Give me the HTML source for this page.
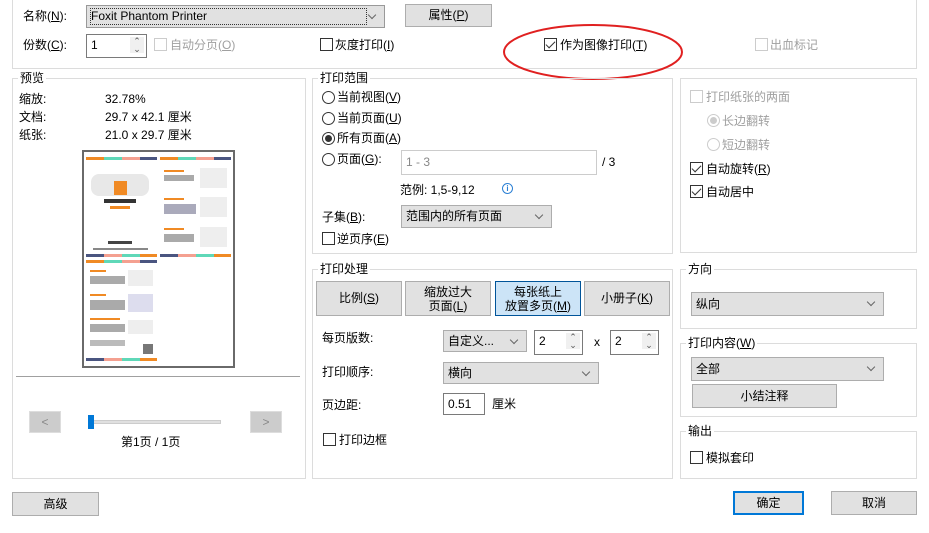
<!DOCTYPE html>
<html><head><meta charset="utf-8"><style>
*{box-sizing:border-box;margin:0;padding:0}
body{width:929px;height:533px;background:#fff;position:relative;overflow:hidden;font-family:"Liberation Sans","Noto Sans CJK SC",sans-serif;font-size:12px;color:#000}
.a{position:absolute;white-space:nowrap;line-height:16px}
.g{position:absolute;border:1px solid #dcdcdc}
.gt{position:absolute;background:#fff;padding:0 2px;line-height:16px;white-space:nowrap}
.btn{position:absolute;background:#e1e1e1;border:1px solid #adadad;text-align:center;line-height:20px}
.sel{position:absolute;background:#e1e1e1;border:1px solid #adadad;line-height:20px;padding-left:4px}
.sel:after{content:"";position:absolute;right:9px;top:6px;width:5px;height:5px;border-right:1px solid #666;border-bottom:1px solid #666;transform:rotate(45deg)}
.inp{position:absolute;background:#fff;border:1px solid #7a7a7a;line-height:20px;padding-left:4px}
.cb{position:absolute;width:13px;height:13px;border:1px solid #333;background:#fff}
.cb.d{border-color:#ccc}
.cb.c:after{content:"";position:absolute;left:3px;top:0px;width:4px;height:8px;border-right:1.5px solid #333;border-bottom:1.5px solid #333;transform:rotate(45deg)}
.rb{position:absolute;width:13px;height:13px;border:1px solid #333;border-radius:50%;background:#fff}
.rb.d{border-color:#ccc}
.rb.c:after{content:"";position:absolute;left:2px;top:2px;width:7px;height:7px;border-radius:50%;background:#333}
.rb.d.c:after{background:#ccc}
.dis{color:#a0a0a0}
.spin{position:absolute;right:2px;top:2px;width:14px;font-size:9px;color:#555;line-height:8px;text-align:center;background:#f0f0f0}
.bar{position:absolute;height:3px}
</style></head><body>

<!-- top group -->
<div class="g" style="left:12px;top:-5px;width:905px;height:74px"></div>
<div class="a" style="left:23px;top:8px">名称(<u>N</u>):</div>
<div class="sel" style="left:86px;top:5px;width:299px;height:23px;border-color:#999"><span style="outline:1px dotted #333;display:inline-block;width:275px;line-height:15px;margin-top:2px">Foxit Phantom Printer</span></div>
<div class="btn" style="left:405px;top:4px;width:87px;height:23px">属性(<u>P</u>)</div>
<div class="a" style="left:23px;top:37px">份数(<u>C</u>):</div>
<div class="inp" style="left:86px;top:34px;width:61px;height:24px">1<div class="spin">⌃<br>⌄</div></div>
<div class="cb d" style="left:154px;top:38px"></div><div class="a dis" style="left:170px;top:37px">自动分页(<u>O</u>)</div>
<div class="cb" style="left:320px;top:38px"></div><div class="a" style="left:335px;top:37px">灰度打印(<u>I</u>)</div>
<div class="cb c" style="left:544px;top:38px"></div><div class="a" style="left:560px;top:37px">作为图像打印(<u>T</u>)</div>
<div class="cb d" style="left:755px;top:38px"></div><div class="a dis" style="left:770px;top:37px">出血标记</div>
<svg style="position:absolute;left:0;top:0" width="929" height="533"><ellipse cx="593" cy="52" rx="89" ry="27" fill="none" stroke="#e02020" stroke-width="2"/></svg>

<!-- preview -->
<div class="g" style="left:12px;top:78px;width:294px;height:401px"></div>
<div class="gt" style="left:18px;top:70px">预览</div>
<div class="a" style="left:19px;top:91px">缩放:</div><div class="a" style="left:105px;top:91px">32.78%</div>
<div class="a" style="left:19px;top:109px">文档:</div><div class="a" style="left:105px;top:109px">29.7 x 42.1 厘米</div>
<div class="a" style="left:19px;top:127px">纸张:</div><div class="a" style="left:105px;top:127px">21.0 x 29.7 厘米</div>
<div style="position:absolute;left:82px;top:150px;width:153px;height:218px;border:2px solid #6a6a6a;background:#fff"></div>
<!-- bars -->
<div class="bar" style="left:86px;top:157px;width:18px;background:#f08a24"></div><div class="bar" style="left:104px;top:157px;width:18px;background:#5fd8b8"></div><div class="bar" style="left:122px;top:157px;width:18px;background:#f4a090"></div><div class="bar" style="left:140px;top:157px;width:17px;background:#4a5580"></div>
<div class="bar" style="left:160px;top:157px;width:18px;background:#f08a24"></div><div class="bar" style="left:178px;top:157px;width:18px;background:#5fd8b8"></div><div class="bar" style="left:196px;top:157px;width:18px;background:#f4a090"></div><div class="bar" style="left:214px;top:157px;width:17px;background:#4a5580"></div>
<div class="bar" style="left:86px;top:254px;width:18px;background:#4a5580"></div><div class="bar" style="left:104px;top:254px;width:18px;background:#f4a090"></div><div class="bar" style="left:122px;top:254px;width:18px;background:#5fd8b8"></div><div class="bar" style="left:140px;top:254px;width:17px;background:#f08a24"></div>
<div class="bar" style="left:160px;top:254px;width:18px;background:#4a5580"></div><div class="bar" style="left:178px;top:254px;width:18px;background:#f4a090"></div><div class="bar" style="left:196px;top:254px;width:18px;background:#5fd8b8"></div><div class="bar" style="left:214px;top:254px;width:17px;background:#f08a24"></div>
<div class="bar" style="left:86px;top:260px;width:18px;background:#f08a24"></div><div class="bar" style="left:104px;top:260px;width:18px;background:#5fd8b8"></div><div class="bar" style="left:122px;top:260px;width:18px;background:#f4a090"></div><div class="bar" style="left:140px;top:260px;width:17px;background:#4a5580"></div>
<div class="bar" style="left:86px;top:358px;width:18px;background:#4a5580"></div><div class="bar" style="left:104px;top:358px;width:18px;background:#f4a090"></div><div class="bar" style="left:122px;top:358px;width:18px;background:#5fd8b8"></div><div class="bar" style="left:140px;top:358px;width:17px;background:#f08a24"></div>
<!-- preview content -->
<div style="position:absolute;left:91px;top:174px;width:58px;height:22px;background:#e8e8e8;border-radius:8px"></div>
<div style="position:absolute;left:114px;top:181px;width:13px;height:14px;background:#f08a24"></div>
<div style="position:absolute;left:104px;top:199px;width:32px;height:4px;background:#333"></div>
<div style="position:absolute;left:110px;top:206px;width:20px;height:3px;background:#f08a24"></div>
<div style="position:absolute;left:108px;top:241px;width:24px;height:3px;background:#444"></div>
<div style="position:absolute;left:93px;top:248px;width:55px;height:2px;background:#888"></div>
<div style="position:absolute;left:164px;top:170px;width:20px;height:2px;background:#f08a24"></div>
<div style="position:absolute;left:164px;top:175px;width:30px;height:6px;background:#aaa"></div>
<div style="position:absolute;left:200px;top:168px;width:27px;height:20px;background:#eee"></div>
<div style="position:absolute;left:164px;top:198px;width:20px;height:2px;background:#f08a24"></div>
<div style="position:absolute;left:164px;top:204px;width:32px;height:10px;background:#aab"></div>
<div style="position:absolute;left:200px;top:197px;width:27px;height:20px;background:#eee"></div>
<div style="position:absolute;left:164px;top:228px;width:20px;height:2px;background:#f08a24"></div>
<div style="position:absolute;left:164px;top:234px;width:30px;height:8px;background:#aaa"></div>
<div style="position:absolute;left:200px;top:227px;width:27px;height:20px;background:#eee"></div>
<div style="position:absolute;left:90px;top:270px;width:16px;height:2px;background:#f08a24"></div>
<div style="position:absolute;left:90px;top:276px;width:35px;height:8px;background:#aaa"></div>
<div style="position:absolute;left:128px;top:270px;width:25px;height:16px;background:#eee"></div>
<div style="position:absolute;left:90px;top:294px;width:16px;height:2px;background:#f08a24"></div>
<div style="position:absolute;left:90px;top:300px;width:35px;height:10px;background:#aaa"></div>
<div style="position:absolute;left:128px;top:294px;width:25px;height:18px;background:#dde"></div>
<div style="position:absolute;left:90px;top:318px;width:30px;height:2px;background:#f08a24"></div>
<div style="position:absolute;left:90px;top:324px;width:35px;height:8px;background:#aaa"></div>
<div style="position:absolute;left:128px;top:320px;width:25px;height:14px;background:#eee"></div>
<div style="position:absolute;left:90px;top:340px;width:35px;height:6px;background:#bbb"></div>
<div style="position:absolute;left:143px;top:344px;width:10px;height:10px;background:#777"></div>
<div style="position:absolute;left:16px;top:376px;width:284px;height:1px;background:#a0a0a0"></div>
<div class="btn" style="left:29px;top:411px;width:32px;height:22px;background:#ccc;border-color:#ddd;color:#888">&lt;</div>
<div class="btn" style="left:250px;top:411px;width:32px;height:22px;background:#ccc;border-color:#ddd;color:#888">&gt;</div>
<div style="position:absolute;left:88px;top:420px;width:133px;height:4px;background:#e0e0e0;border:1px solid #ccc"></div>
<div style="position:absolute;left:88px;top:415px;width:6px;height:14px;background:#0078d7"></div>
<div class="a" style="left:121px;top:434px">第1页 / 1页</div>

<!-- print range -->
<div class="g" style="left:312px;top:78px;width:361px;height:176px"></div>
<div class="gt" style="left:318px;top:70px">打印范围</div>
<div class="rb" style="left:322px;top:91px"></div><div class="a" style="left:337px;top:89px">当前视图(<u>V</u>)</div>
<div class="rb" style="left:322px;top:112px"></div><div class="a" style="left:337px;top:110px">当前页面(<u>U</u>)</div>
<div class="rb c" style="left:322px;top:132px"></div><div class="a" style="left:337px;top:130px">所有页面(<u>A</u>)</div>
<div class="rb" style="left:322px;top:153px"></div><div class="a" style="left:337px;top:151px">页面(<u>G</u>):</div>
<div class="inp" style="left:401px;top:150px;width:196px;height:25px;border-color:#ccc;color:#888;line-height:22px">1 - 3</div>
<div class="a" style="left:602px;top:154px">/ 3</div>
<div class="a" style="left:400px;top:182px">范例: 1,5-9,12</div>
<div style="position:absolute;left:502px;top:183px;width:11px;height:11px;border:1px solid #2a7fd4;border-radius:50%;color:#2a7fd4;font-size:8px;line-height:9px;text-align:center;font-weight:bold">i</div>
<div class="a" style="left:322px;top:209px">子集(<u>B</u>):</div>
<div class="sel" style="left:401px;top:205px;width:151px;height:23px">范围内的所有页面</div>
<div class="cb" style="left:322px;top:232px"></div><div class="a" style="left:337px;top:231px">逆页序(<u>E</u>)</div>

<!-- print processing -->
<div class="g" style="left:312px;top:269px;width:361px;height:210px"></div>
<div class="gt" style="left:318px;top:261px">打印处理</div>
<div class="btn" style="left:316px;top:281px;width:86px;height:35px;line-height:33px">比例(<u>S</u>)</div>
<div class="btn" style="left:405px;top:281px;width:86px;height:35px;line-height:14px;padding-top:3px">缩放过大<br>页面(<u>L</u>)</div>
<div class="btn" style="left:495px;top:281px;width:86px;height:35px;line-height:14px;padding-top:3px;background:#cce4f7;border-color:#005499">每张纸上<br>放置多页(<u>M</u>)</div>
<div class="btn" style="left:584px;top:281px;width:86px;height:35px;line-height:33px">小册子(<u>K</u>)</div>
<div class="a" style="left:322px;top:330px">每页版数:</div>
<div class="sel" style="left:443px;top:330px;width:84px;height:22px">自定义...</div>
<div class="inp" style="left:534px;top:330px;width:49px;height:25px">2<div class="spin">⌃<br>⌄</div></div>
<div class="a" style="left:594px;top:334px">x</div>
<div class="inp" style="left:610px;top:330px;width:49px;height:25px">2<div class="spin">⌃<br>⌄</div></div>
<div class="a" style="left:322px;top:364px">打印顺序:</div>
<div class="sel" style="left:443px;top:362px;width:156px;height:22px">横向</div>
<div class="a" style="left:322px;top:397px">页边距:</div>
<div class="inp" style="left:443px;top:393px;width:42px;height:22px">0.51</div>
<div class="a" style="left:492px;top:396px">厘米</div>
<div class="cb" style="left:323px;top:433px"></div><div class="a" style="left:339px;top:432px">打印边框</div>

<!-- right -->
<div class="g" style="left:680px;top:78px;width:237px;height:175px"></div>
<div class="cb d" style="left:690px;top:90px"></div><div class="a dis" style="left:706px;top:89px">打印纸张的两面</div>
<div class="rb d c" style="left:707px;top:114px"></div><div class="a dis" style="left:722px;top:113px">长边翻转</div>
<div class="rb d" style="left:707px;top:138px"></div><div class="a dis" style="left:722px;top:137px">短边翻转</div>
<div class="cb c" style="left:690px;top:162px"></div><div class="a" style="left:706px;top:161px">自动旋转(<u>R</u>)</div>
<div class="cb c" style="left:690px;top:185px"></div><div class="a" style="left:706px;top:184px">自动居中</div>

<div class="g" style="left:680px;top:269px;width:237px;height:60px"></div>
<div class="gt" style="left:686px;top:261px">方向</div>
<div class="sel" style="left:691px;top:292px;width:193px;height:24px;line-height:22px">纵向</div>

<div class="g" style="left:680px;top:343px;width:237px;height:74px"></div>
<div class="gt" style="left:686px;top:335px">打印内容(<u>W</u>)</div>
<div class="sel" style="left:691px;top:357px;width:193px;height:24px;line-height:22px">全部</div>
<div class="btn" style="left:692px;top:384px;width:145px;height:24px;line-height:22px">小结注释</div>

<div class="g" style="left:680px;top:431px;width:237px;height:48px"></div>
<div class="gt" style="left:686px;top:423px">输出</div>
<div class="cb" style="left:690px;top:451px"></div><div class="a" style="left:706px;top:450px">模拟套印</div>

<div class="btn" style="left:12px;top:492px;width:87px;height:24px;line-height:22px">高级</div>
<div class="btn" style="left:733px;top:491px;width:71px;height:24px;line-height:20px;border:2px solid #0078d7">确定</div>
<div class="btn" style="left:831px;top:491px;width:86px;height:24px;line-height:22px">取消</div>
</body></html>
